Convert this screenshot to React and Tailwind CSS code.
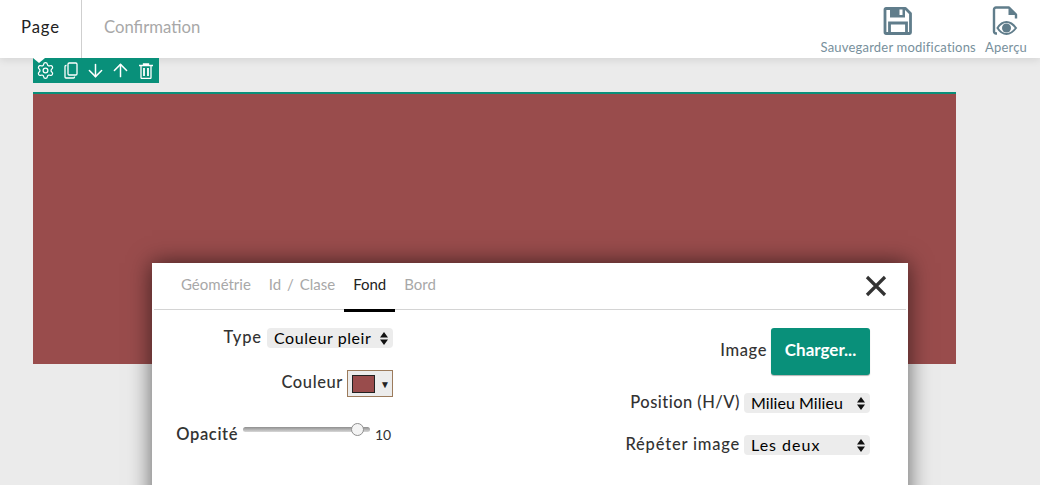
import { ArrowDown, ArrowUp, Settings } from "lucide-react"

const font = { fontFamily: "Lato, 'Open Sans', sans-serif" }

function SaveIcon() {
  return (
    <svg width="30" height="30" viewBox="0 0 30 30" fill="none" className="text-[#607d8b]">
      <path d="M3 2.500h19.500l5 5v19a1 1 0 0 1-1 1h-23.500a1 1 0 0 1-1-1v-23a1 1 0 0 1 1-1z" stroke="currentColor" strokeWidth="2.800" strokeLinejoin="round" />
      <path d="M7 2.500h15v9h-15z" fill="currentColor" />
      <rect x="16.500" y="3.500" width="3" height="5.500" fill="#fff" />
      <path d="M6.500 27v-10h17v10" stroke="currentColor" strokeWidth="2.800" />
    </svg>
  )
}

function PreviewIcon() {
  return (
    <svg width="28" height="30" viewBox="0 0 28 30" fill="none" className="text-[#607d8b]">
      <path d="M5 27.500h-1a2 2 0 0 1-2-2v-22a2 2 0 0 1 2-2h13l7 7v4" stroke="currentColor" strokeWidth="2.400" strokeLinejoin="round" />
      <path d="M16.500 2v7h7.500z" fill="currentColor" />
      <path d="M5.500 22c2.500-4 5.500-6 9-6s6.500 2 9.500 6c-3 4-6 6-9.500 6s-6.500-2-9-6z" fill="#fff" stroke="currentColor" strokeWidth="2" />
      <circle cx="14.500" cy="22" r="4.500" fill="currentColor" />
    </svg>
  )
}

function CopyIcon() {
  return (
    <svg width="14" height="17" viewBox="0 0 14 17" fill="none" stroke="currentColor" strokeWidth="1.300">
      <rect x="4" y="1" width="9" height="12" rx="1.200" />
      <path d="M2.500 3.500h-.500a1 1 0 0 0-1 1v10.500a1 1 0 0 0 1 1h7.500a1 1 0 0 0 1-1v-.5" />
    </svg>
  )
}

function TrashIcon() {
  return (
    <svg width="14" height="16" viewBox="0 0 14 16" fill="none" stroke="currentColor" strokeWidth="1.300">
      <path d="M0 2.500h14M4.500 2.500v-1.500h5v1.500M2 2.500v12a1 1 0 0 0 1 1h8a1 1 0 0 0 1-1v-12" />
      <path d="M5 5v8M9 5v8" strokeWidth="1.800" />
    </svg>
  )
}

function Updown() {
  return (
    <svg width="8" height="13" viewBox="0 0 8 13" fill="#111" className="shrink-0">
      <path d="M4 0l4 5.500h-8zM4 13l-4-5.500h8z" />
    </svg>
  )
}

function FakeSelect({ value, spacing }) {
  return (
    <div className="flex h-5 w-[126px] items-center justify-between rounded-[4px] bg-[#ececec] pl-[7px] pr-[5px] text-[16px] font-normal leading-5 text-black">
      <span className={spacing}>{value}</span>
      <Updown />
    </div>
  )
}

function ToolButton({ children }) {
  return <span className="flex w-[25px] items-center justify-center text-white">{children}</span>
}

export default function App() {
  return (
    <div style={font} className="relative h-[485px] w-[1040px] overflow-hidden bg-[#ebebeb]">
      <header className="flex h-[58px] items-stretch justify-between bg-white shadow-[0_2px_8px_rgba(0,0,0,0.1)]">
        <nav className="flex items-stretch text-[16.700px]">
          <div className="flex w-[82px] items-center justify-center border-r border-[#cfcfcf] pb-[2px] tracking-[0.9px] text-[#222]">Page</div>
          <div className="flex items-center pb-[2px] pl-[22px] text-[#a8a8a8]">Confirmation</div>
        </nav>
        <div className="flex items-start pr-[13px] pt-[6px] text-[13px] leading-4 tracking-[0.2px] text-[#78909c]">
          <div className="flex flex-col items-center">
            <SaveIcon />
            <span className="mt-[3px]">Sauvegarder modifications</span>
          </div>
          <div className="ml-[9px] flex flex-col items-center">
            <PreviewIcon />
            <span className="mt-[3px]">Aperçu</span>
          </div>
        </div>
      </header>

      <main className="pl-[33px]">
        <div className="relative flex h-[25px] w-[126px] items-center bg-[#09907a]">
          <span className="absolute left-0 top-0 h-0 w-0 border-x-[6px] border-t-[5px] border-x-transparent border-t-white" />
          <ToolButton><Settings size={19} strokeWidth={1.600} /></ToolButton>
          <ToolButton><CopyIcon /></ToolButton>
          <ToolButton><ArrowDown size={21} strokeWidth={1.700} /></ToolButton>
          <ToolButton><ArrowUp size={21} strokeWidth={1.700} /></ToolButton>
          <ToolButton><TrashIcon /></ToolButton>
        </div>
        <div className="mt-[9px] h-[272px] w-[923px] border-t-2 border-[#09907a] bg-[#994c4c]" />
      </main>

      <section className="absolute left-[152px] top-[263px] h-[260px] w-[756px] bg-white shadow-[0_0_22px_rgba(0,0,0,0.6)]">
        <div className="mx-[2px] flex h-[47px] items-stretch justify-between border-b border-[#d4d4d4] pl-[18px] pr-[19px] text-[15px]">
          <div className="flex items-stretch">
            <span className="flex items-center px-[9px] pb-[3px] text-[#a8a8a8]">Géométrie</span>
            <span className="flex items-center px-[9px] pb-[3px] text-[#a8a8a8] [word-spacing:2px]">Id / Clase</span>
            <span className="-mb-[3px] flex items-center border-b-[3px] border-black px-[9px] pb-[3px] text-[#222]">Fond</span>
            <span className="flex items-center px-[9px] pb-[3px] text-[#a8a8a8]">Bord</span>
          </div>
          <svg width="22" height="22" viewBox="0 0 22 22" className="self-center text-[#333]">
            <path d="M2 2l18 18M20 2l-18 18" stroke="currentColor" strokeWidth="3.200" />
          </svg>
        </div>

        <div className="flex justify-between pl-[26px] pr-[38px] pt-[18px] text-[16.500px] font-medium tracking-[0.6px] text-[#333]">
          <div className="flex w-[215px] flex-col items-end">
            <div className="flex h-5 items-center gap-[5px]">
              <span className="pb-[2px] tracking-[0.9px]">Type</span>
              <FakeSelect value="Couleur pleir" spacing="tracking-[0.55px]" />
            </div>
            <div className="mt-[22px] flex h-[27px] items-center gap-1">
              <span className="pb-[2px]">Couleur</span>
              <div className="flex h-[27px] w-[46px] items-center gap-[5px] border border-[#9c7b5c] bg-[#ececec] pl-1">
                <span className="h-[18px] w-[23px] border border-[#222] bg-[#994c4c]" />
                <span className="text-[10px] leading-none text-[#222]">▼</span>
              </div>
            </div>
            <div className="mt-[27px] flex h-5 items-center">
              <span className="font-semibold">Opacité</span>
              <div className="relative ml-[5px] mt-[-10px] h-[5px] w-[127px] rounded-full bg-gradient-to-b from-[#8f8f8f] to-[#d8d8d8]">
                <span className="absolute left-[108px] top-[-4px] h-[13px] w-[13px] rounded-full border border-[#8f8f8f] bg-[#f4f4f4]" />
              </div>
              <span className="ml-[5px] w-[18px] text-[14px] font-normal tracking-normal">10</span>
            </div>
          </div>

          <div className="flex flex-col items-end">
            <div className="flex items-center gap-1">
              <span className="pb-[2px]">Image</span>
              <div className="flex h-[47px] w-[99px] items-center justify-center rounded-[3px] bg-[#09907a] pb-[3px] text-[17px] font-bold tracking-normal text-white shadow-[0_1px_1px_rgba(0,0,0,0.3)]">Charger...</div>
            </div>
            <div className="mt-[18px] flex h-5 items-center gap-1">
              <span className="pb-[2px] tracking-[0.45px]">Position (H/V)</span>
              <FakeSelect value="Milieu Milieu" spacing="tracking-[0.05px]" />
            </div>
            <div className="mt-[22px] flex h-5 items-center gap-1">
              <span className="pb-[2px] tracking-[0.8px]">Répéter image</span>
              <FakeSelect value="Les deux" spacing="tracking-[1px]" />
            </div>
          </div>
        </div>
      </section>
    </div>
  )
}
